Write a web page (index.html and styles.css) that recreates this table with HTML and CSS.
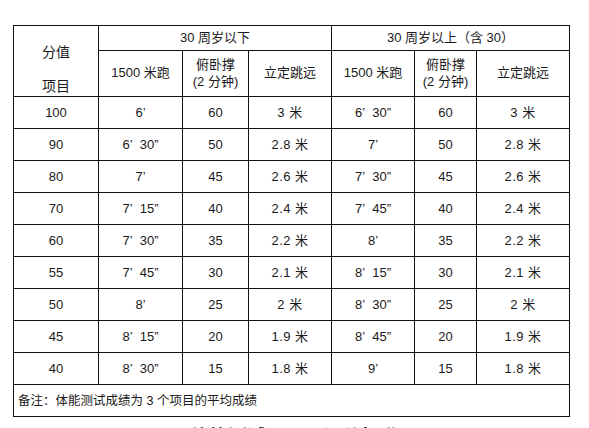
FILE: index.html
```html
<!DOCTYPE html>
<html lang="zh-CN">
<head>
<meta charset="utf-8">
<title>体能测试评分标准</title>
<link rel="stylesheet" href="styles.css">
</head>
<body>
<table class="score">
  <colgroup>
    <col class="c1"><col class="c2"><col class="c3"><col class="c4"><col class="c5"><col class="c6"><col class="c7">
  </colgroup>
  <tr class="h1">
    <td rowspan="2" class="corner"><div class="k1">分值</div><div class="k2">项目</div></td>
    <td colspan="3">30 周岁以下</td>
    <td colspan="3">30 周岁以上（含 30）</td>
  </tr>
  <tr class="h2">
    <td>1500 米跑</td>
    <td class="two">俯卧撑<br>(2 分钟)</td>
    <td>立定跳远</td>
    <td>1500 米跑</td>
    <td class="two">俯卧撑<br>(2 分钟)</td>
    <td>立定跳远</td>
  </tr>
  <tr><td>100</td><td>6’</td><td>60</td><td class="m">3 米</td><td>6’&nbsp; 30”</td><td>60</td><td class="m">3 米</td></tr>
  <tr><td>90</td><td>6’&nbsp; 30”</td><td>50</td><td class="m">2.8 米</td><td>7’</td><td>50</td><td class="m">2.8 米</td></tr>
  <tr><td>80</td><td>7’</td><td>45</td><td class="m">2.6 米</td><td>7’&nbsp; 30”</td><td>45</td><td class="m">2.6 米</td></tr>
  <tr><td>70</td><td>7’&nbsp; 15”</td><td>40</td><td class="m">2.4 米</td><td>7’&nbsp; 45”</td><td>40</td><td class="m">2.4 米</td></tr>
  <tr><td>60</td><td>7’&nbsp; 30”</td><td>35</td><td class="m">2.2 米</td><td>8’</td><td>35</td><td class="m">2.2 米</td></tr>
  <tr><td>55</td><td>7’&nbsp; 45”</td><td>30</td><td class="m">2.1 米</td><td>8’&nbsp; 15”</td><td>30</td><td class="m">2.1 米</td></tr>
  <tr><td>50</td><td>8’</td><td>25</td><td class="m">2 米</td><td>8’&nbsp; 30”</td><td>25</td><td class="m">2 米</td></tr>
  <tr><td>45</td><td>8’&nbsp; 15”</td><td>20</td><td class="m">1.9 米</td><td>8’&nbsp; 45”</td><td>20</td><td class="m">1.9 米</td></tr>
  <tr><td>40</td><td>8’&nbsp; 30”</td><td>15</td><td class="m">1.8 米</td><td>9’</td><td>15</td><td class="m">1.8 米</td></tr>
  <tr class="note"><td colspan="7">备注：体能测试成绩为 3 个项目的平均成绩</td></tr>
</table>
<h2 class="next">体能测试项目及评分标准</h2>
</body>
</html>
```
FILE: styles.css
```css
html, body {
  margin: 0;
  padding: 0;
  background: #ffffff;
}
body {
  padding: 25px 0 0 13px;
  font-family: "Liberation Sans", "Noto Sans CJK SC", sans-serif;
  color: #1a1a1a;
}
.score {
  border-collapse: collapse;
  table-layout: fixed;
  width: 556px;
  font-size: 13px;
}
.c1 { width: 85px; }
.c2 { width: 84px; }
.c3 { width: 66px; }
.c4 { width: 83px; }
.c5 { width: 83px; }
.c6 { width: 62px; }
.c7 { width: 93px; }
.score td {
  border: 1px solid #111;
  text-align: center;
  vertical-align: middle;
  padding: 0;
  height: 31px;
  line-height: 16px;
  white-space: nowrap;
}
.score .h1 td { height: 23px; }
.score .h2 td { height: 44px; }
.score td.two { line-height: 17px; }
.score td.corner { vertical-align: top; }
.k1 { margin-top: 16px; line-height: 20px; font-size: 14px; }
.k2 { margin-top: 14px; line-height: 20px; font-size: 14px; }
.m { letter-spacing: 0.5px; }
.score .note td {
  text-align: left;
  padding-left: 4px;
  height: 31px;
  font-size: 12.5px;
}
.next {
  margin: 9px 0 0 -13px;
  font-size: 19px;
  line-height: 19px;
  font-weight: bold;
  text-align: center;
  color: #111;
  font-family: "Noto Sans CJK SC", sans-serif;
}
```
